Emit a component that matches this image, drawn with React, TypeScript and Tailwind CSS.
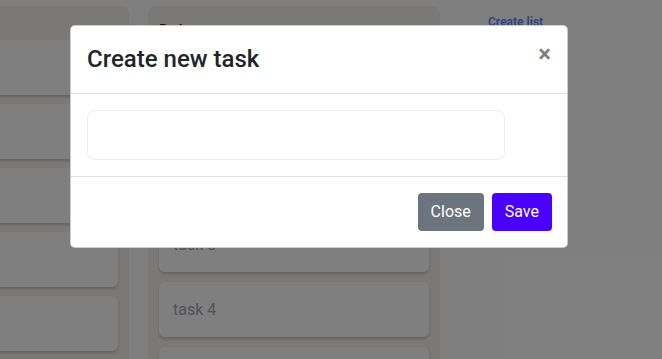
const todo = ["task 1", "task 2", "task 3", "task 4", "task 5"];
const doing = ["task 1", "task 2", "task 3", "task 4", "task 5"];

const Card = ({ text }: { text: string }) => (
  <div className="flex h-[55px] shrink-0 items-center rounded-md bg-white px-[14px] text-[16px] text-[#a3a6ad] shadow-[0_2px_3px_rgba(0,0,0,0.18)]">
    {text}
  </div>
);

const Column = ({
  title,
  tasks,
  listClass,
}: {
  title: string;
  tasks: string[];
  listClass: string;
}) => (
  <div className="flex min-h-[420px] w-[292px] shrink-0 flex-col rounded-lg bg-[#f4f2f0] px-[11px]">
    <div className="flex h-[34px] items-start justify-between pt-[13px]">
      <span className="text-[16px] leading-6 font-bold text-[#222]">{title}</span>
      <span className="pr-[6px] text-[18px] leading-6 font-bold text-[#6f8cff]">+</span>
    </div>
    <div className={listClass}>
      {tasks.map((t, i) => (
        <Card key={i} text={t} />
      ))}
    </div>
  </div>
);

export default function App() {
  return (
    <div className="relative h-[359px] w-[662px] overflow-hidden bg-white font-['Roboto',sans-serif]">
      <div className="ml-[-163px] flex gap-[19px] pt-[6px]">
        <Column title="To do" tasks={todo} listClass="flex flex-col gap-[9px]" />
        <Column title="Doing" tasks={doing} listClass="mt-[47px] flex flex-col gap-[10px]" />
        <div className="pl-[29px] pt-[3px]">
          <a className="text-[12px] leading-5 font-bold text-[#6a88ff]">Create list</a>
        </div>
      </div>

      <div className="absolute inset-0 bg-black/50" />

      <div className="absolute top-[25px] left-[70px] w-[498px] rounded-[5px] border border-black/20 bg-white">
        <div className="flex items-start justify-between border-b border-[#dee2e6] p-4">
          <h5 className="text-[24px] leading-[35px] font-medium text-[#212529]">Create new task</h5>
          <button className="-m-4 ml-auto p-4 text-[24px] leading-6 font-bold text-black/50">×</button>
        </div>
        <div className="p-4">
          <div className="h-[50px] w-[418px] rounded-lg border border-[#ededed]" />
        </div>
        <div className="flex justify-end gap-2 border-t border-[#dee2e6] py-4 pr-[15px]">
          <button className="rounded bg-[#6c757d] px-[13px] py-[7px] text-[16px] leading-6 text-white">Close</button>
          <button className="rounded bg-[#4a00ff] px-[13px] py-[7px] text-[16px] leading-6 text-white">Save</button>
        </div>
      </div>
    </div>
  );
}
